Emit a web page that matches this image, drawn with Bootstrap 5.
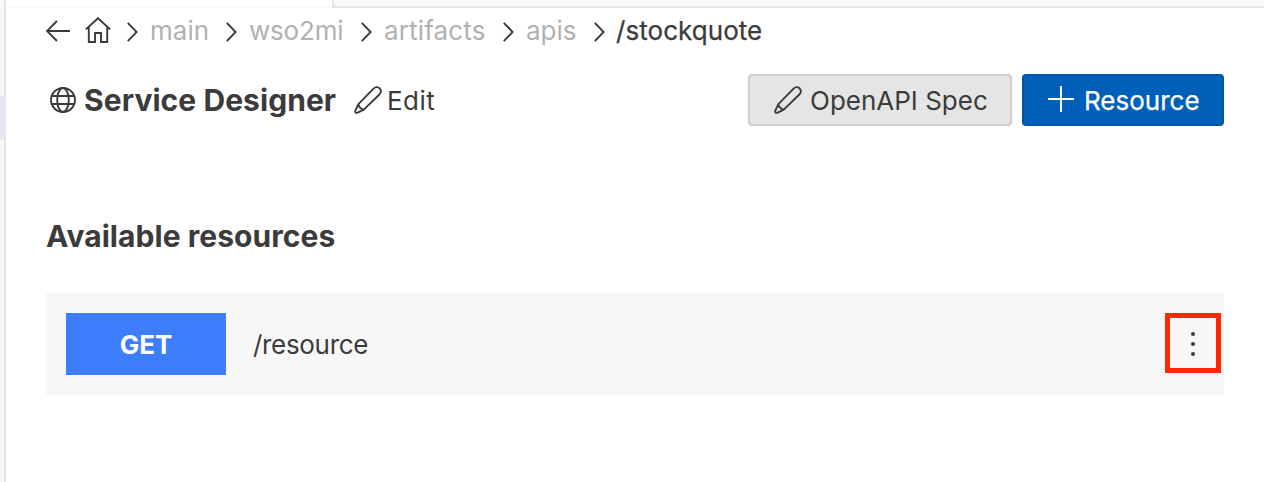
<!DOCTYPE html>
<html lang="en">
<head>
<meta charset="utf-8">
<meta name="viewport" content="width=device-width, initial-scale=1">
<title>Service Designer</title>
<link href="https://cdn.jsdelivr.net/npm/bootstrap@5.3.0/dist/css/bootstrap.min.css" rel="stylesheet">
<style>
body{font-family:Inter,"Liberation Sans",sans-serif;font-size:26px;line-height:32px;color:#3b3b3b;background:#fff;overflow:hidden}
svg{display:block;flex:none;fill:none;stroke:#3b3b3b;stroke-width:1.9}
.rail{width:6px;background:#f8f8f8;border-right:2px solid #e5e5e5;padding-top:96px}
.rail-mark{height:44px;background:#e4e6f1}
.tabs{height:8px}
.tab-on{width:328px;border-right:2px solid #e5e5e5}
.tab-line{height:2px;width:326px;background:#f8f8f8}
.tab-rest{background:#f8f8f8;border-bottom:2px solid #e5e5e5}
.main{padding:0 40px}
.crumbs{height:46px}
.crumb{color:#b1b1b1;white-space:nowrap}
.back{margin-right:15px}
.home{margin:-3px 16px 0 0}
.chev{margin:2px 11px 0 0}
.crumb-main{width:76px}
.crumb-wso{width:112px;letter-spacing:-.2px}
.crumb-art{width:119px;letter-spacing:.15px}
.crumb-apis{width:68px}
.crumb-current{letter-spacing:.05px;margin-left:-1px;-webkit-text-stroke:.25px #3b3b3b}
.titlebar{height:52px;margin-top:20px}
.globe{margin:-1px 8px 0 4px}
.pen-edit{margin:0 5px 0 18px}
.edit{letter-spacing:.4px;padding-top:1px}
.spec,.add{padding-top:1px}
h1,h2{font-size:30px;line-height:36px;font-weight:700;margin:0;white-space:nowrap;letter-spacing:.06px}
h2{margin-top:92px}
.btn{--bs-btn-font-size:26px;--bs-btn-line-height:32px;--bs-btn-padding-x:24px;--bs-btn-padding-y:8px;--bs-btn-border-width:2px;--bs-btn-border-radius:4px;white-space:nowrap;height:52px}
.btn-spec{width:264px;--bs-btn-bg:#e5e5e5;--bs-btn-border-color:#cecece;--bs-btn-color:#3b3b3b}
.btn-add{width:202px;--bs-btn-bg:#005fb8;--bs-btn-border-color:#0055a6;--bs-btn-color:#fff}
.plus{stroke:#fff;margin:-2px 10px 0 0}
.add{-webkit-text-stroke:.25px #fff}
.resource{height:102px;margin-top:39px;background:#f7f7f7;padding:0 3.5px 0 20px}
.method{width:160px;height:62px;background:#3d7eff;color:#fff;font-weight:700;font-size:26px;padding-top:1px}
.path{margin-left:27px;padding-top:2px;letter-spacing:-.32px}
.more{width:56px;height:60px;border:5px solid #ff2600;background:none;padding:0;margin-top:-3px}
.more svg{fill:#3b3b3b;stroke:none;margin-top:2px}
</style>
</head>
<body>
<svg width="0" height="0" class="position-absolute">
<symbol id="chev" viewBox="0 0 12 20"><path d="M.8.8 9.6 10 .8 19.2"/></symbol>
<symbol id="pen" viewBox="0 0 28 28"><path d="M4.4 18.2 19.8 2.4Q22.6-.1 25.6 2.3 28.2 5.2 25.6 8.2L9.8 23.6 3.2 26.8Q.9 27.2 1.2 24.8ZM4.4 18.2Q5 22.6 9.8 23.6" stroke-linejoin="round"/></symbol>
</svg>
<div class="d-flex vh-100">
<aside class="rail flex-shrink-0"><div class="rail-mark"></div></aside>
<div class="flex-grow-1">
<div class="tabs d-flex"><div class="tab-on d-flex align-items-end"><div class="tab-line"></div></div><div class="tab-rest flex-grow-1"></div></div>
<main class="main">
<nav class="crumbs d-flex align-items-center">
<svg class="back" width="24" height="22" viewBox="0 0 24 22"><path d="M11 1 1 11 11 21M1 11H24"/></svg>
<svg class="home" width="26" height="26" viewBox="0 0 26 26"><path d="M.8 12.4 13 1.2 25.2 12.4M3.8 10V25H10V16H16V25H22.2V10"/></svg>
<svg class="chev" width="12" height="20"><use href="#chev"/></svg>
<span class="crumb crumb-main">main</span>
<svg class="chev" width="12" height="20"><use href="#chev"/></svg>
<span class="crumb crumb-wso">wso2mi</span>
<svg class="chev" width="12" height="20"><use href="#chev"/></svg>
<span class="crumb crumb-art">artifacts</span>
<svg class="chev" width="12" height="20"><use href="#chev"/></svg>
<span class="crumb crumb-apis">apis</span>
<svg class="chev" width="12" height="20"><use href="#chev"/></svg>
<span class="text-nowrap crumb-current">/stockquote</span>
</nav>
<header class="titlebar d-flex align-items-center">
<svg class="globe" width="26" height="26" viewBox="0 0 26 26"><circle cx="13" cy="13" r="12"/><ellipse cx="13" cy="13" rx="5.8" ry="12"/><path d="M2 9H24M2 17H24"/></svg>
<h1>Service Designer</h1>
<svg class="pen-edit" width="28" height="28"><use href="#pen"/></svg>
<span class="edit">Edit</span>
<div class="d-flex ms-auto" style="gap:10px">
<button class="btn btn-spec d-flex align-items-center"><svg width="28" height="28" class="me-2"><use href="#pen"/></svg><span class="spec">OpenAPI Spec</span></button>
<button class="btn btn-add d-flex align-items-center"><svg class="plus" width="26" height="26" viewBox="0 0 26 26"><path d="M13 0V26M0 13H26"/></svg><span class="add">Resource</span></button>
</div>
</header>
<h2>Available resources</h2>
<section class="resource d-flex align-items-center">
<div class="method d-flex align-items-center justify-content-center"><span>GET</span></div>
<span class="path">/resource</span>
<button class="more ms-auto d-flex align-items-center justify-content-center" aria-label="More"><svg width="6" height="26" viewBox="0 0 6 26"><circle cx="3" cy="3" r="2"/><circle cx="3" cy="13" r="2"/><circle cx="3" cy="23" r="2"/></svg></button>
</section>
</main>
</div>
</div>
<script src="https://cdn.jsdelivr.net/npm/bootstrap@5.3.0/dist/js/bootstrap.bundle.min.js"></script>
</body>
</html>
